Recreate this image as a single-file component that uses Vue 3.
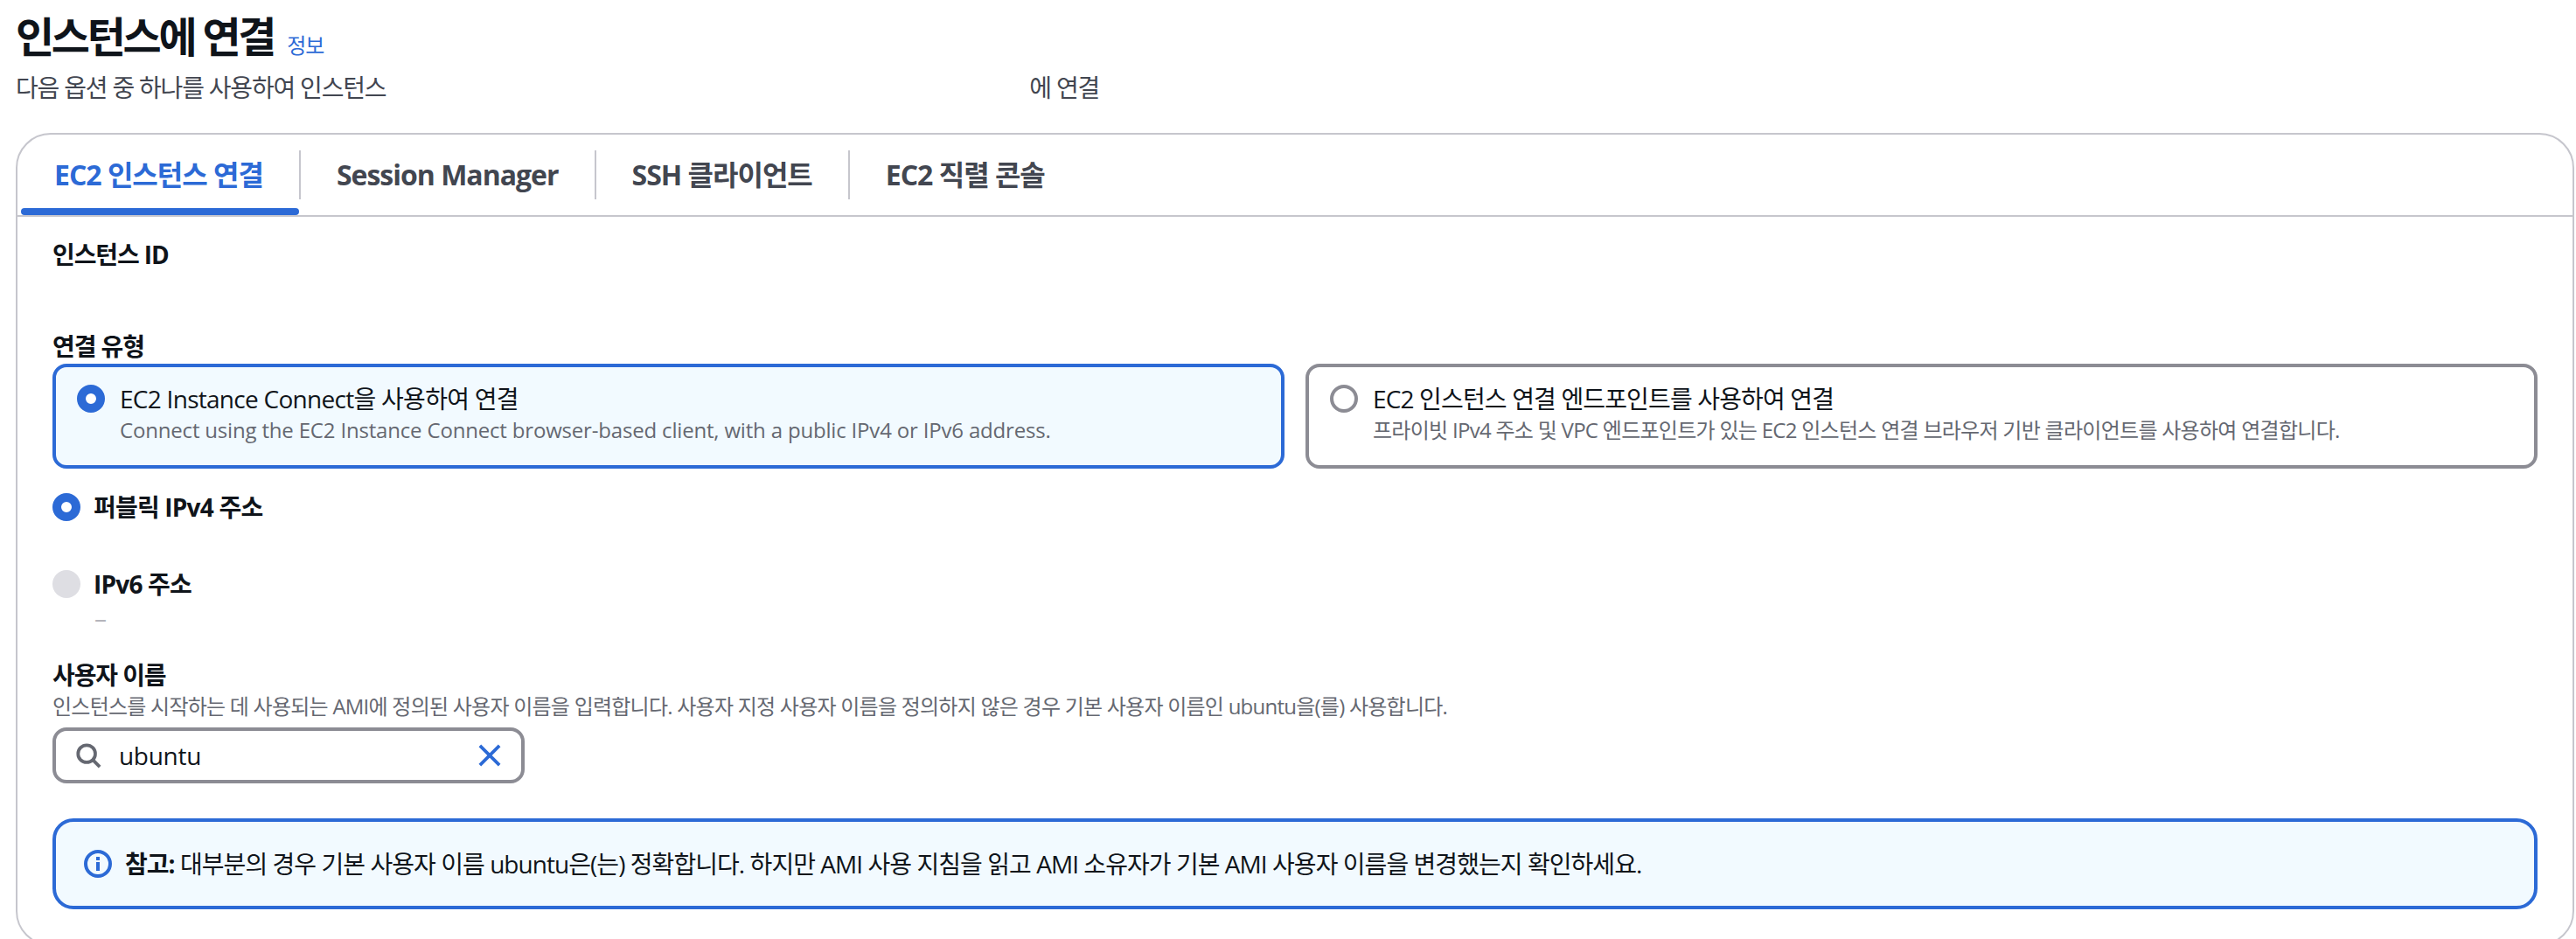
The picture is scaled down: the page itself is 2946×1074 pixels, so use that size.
<script setup>
const tabs = ['EC2 인스턴스 연결', 'Session Manager', 'SSH 클라이언트', 'EC2 직렬 콘솔']
</script>

<template>
  <main class="page">
    <header class="head">
      <div class="title-row">
        <h1 class="title">인스턴스에 연결</h1>
        <a class="info">정보</a>
      </div>
      <p class="subtitle"><span>다음 옵션 중 하나를 사용하여 인스턴스</span><span class="blank"></span><span>에 연결</span></p>
    </header>

    <section class="panel">
      <nav class="tabs">
        <div v-for="(t, i) in tabs" :key="t" class="tab" :class="{ active: i === 0 }">{{ t }}</div>
      </nav>

      <div class="body">
        <div class="label id-label">인스턴스 ID</div>
        <div class="label type-label">연결 유형</div>
        <div class="cards">
          <div class="card selected">
            <span class="radio on"></span>
            <div class="card-text">
              <div class="card-title">EC2 Instance Connect을 사용하여 연결</div>
              <div class="muted latin">Connect using the EC2 Instance Connect browser-based client, with a public IPv4 or IPv6 address.</div>
            </div>
          </div>
          <div class="card">
            <span class="radio off"></span>
            <div class="card-text">
              <div class="card-title">EC2 인스턴스 연결 엔드포인트를 사용하여 연결</div>
              <div class="muted">프라이빗 IPv4 주소 및 VPC 엔드포인트가 있는 EC2 인스턴스 연결 브라우저 기반 클라이언트를 사용하여 연결합니다.</div>
            </div>
          </div>
        </div>

        <div class="option first"><span class="radio on"></span><span class="label">퍼블릭 IPv4 주소</span></div>
        <div class="option second"><span class="radio disabled"></span><span class="label">IPv6 주소</span></div>
        <div class="dash">–</div>

        <div class="label">사용자 이름</div>
        <div class="muted hint">인스턴스를 시작하는 데 사용되는 AMI에 정의된 사용자 이름을 입력합니다. 사용자 지정 사용자 이름을 정의하지 않은 경우 기본 사용자 이름인 ubuntu을(를) 사용합니다.</div>
        <div class="search">
          <svg class="search-icon" viewBox="0 0 32 32" fill="none" stroke="#656871" stroke-width="4">
            <circle cx="14" cy="14" r="10.5" />
            <path d="M21.5 21.5 30 30" />
          </svg>
          <span class="search-value">ubuntu</span>
          <svg class="clear-icon" viewBox="0 0 28 28" fill="none" stroke="#2c6ad6" stroke-width="4">
            <path d="M2 2 26 26M26 2 2 26" />
          </svg>
        </div>

        <div class="alert">
          <svg class="alert-icon" viewBox="0 0 32 32" fill="none" stroke="#2c6ad6" stroke-width="4">
            <circle cx="16" cy="16" r="14" />
            <path d="M16 14v10M16 8v4" />
          </svg>
          <p class="alert-text"><b>참고:</b> 대부분의 경우 기본 사용자 이름 ubuntu은(는) 정확합니다. 하지만 AMI 사용 지침을 읽고 AMI 소유자가 기본 AMI 사용자 이름을 변경했는지 확인하세요.</p>
        </div>
      </div>
    </section>
  </main>
</template>

<style>
html, body { margin: 0; background: #fff; overflow: hidden; }
</style>

<style scoped>
.page {
  width: 2946px;
  box-sizing: border-box;
  padding-top: 12px;
  font-family: "Open Sans", "Noto Sans CJK KR", sans-serif;
  font-size: 28px;
  color: #0f141a;
}
.head { padding-left: 18px; }
.title-row { display: flex; align-items: center; height: 60px; gap: 15px; }
.title { margin: 0; font-size: 48px; font-weight: 700; line-height: 60px; letter-spacing: -3.3px; }
.info { font-size: 24px; color: #2c6ad6; line-height: 32px; margin-top: 20px; letter-spacing: -1px; }
.subtitle { margin: 8px 0 0; display: flex; line-height: 40px; color: #424650; letter-spacing: -1.2px; }
.blank { width: 736px; }

.panel {
  margin: 32px 2px 0 18px;
  border: 2px solid #c6c6cd;
  border-radius: 40px;
  background: #fff;
}
.tabs {
  display: flex;
  height: 92px;
  border-bottom: 2px solid #c6c6cd;
  padding-left: 4px;
}
.tab {
  position: relative;
  height: 56px;
  margin-top: 18px;
  padding: 0 41px;
  border-right: 2px solid #c6c6cd;
  font-size: 32px;
  font-weight: 700;
  line-height: 56px;
  letter-spacing: -1px;
  color: #424650;
}
.tab:first-child { padding: 0 41px 0 38px; }
.tab:last-child { border-right: 0; }
.tab.active { color: #2c6ad6; }
.tab.active::after {
  content: "";
  position: absolute;
  left: 0;
  right: 0;
  top: 66px;
  height: 8px;
  border-radius: 4px;
  background: #2c6ad6;
}

.body { padding: 23px 40px 40px; }
.label { font-weight: 700; line-height: 40px; color: #0f141a; letter-spacing: -1.1px; }
.option .label { letter-spacing: -0.8px; }
.type-label { margin-top: 65px; }
.cards { display: grid; grid-template-columns: 1fr 1fr; gap: 24px; }
.card {
  display: flex;
  height: 120px;
  box-sizing: border-box;
  border: 4px solid #8c8c94;
  border-radius: 16px;
  padding: 20px 24px 0;
  gap: 17px;
}
.card.selected { border-color: #2c6ad6; background: #f2faff; }
.card-text { margin-top: -2px; }
.card-title { line-height: 36px; color: #0f141a; letter-spacing: -0.85px; }
.selected .card-title { letter-spacing: -0.72px; }
.muted { font-size: 24px; line-height: 36px; color: #656871; letter-spacing: -0.72px; }
.muted.latin { letter-spacing: -0.18px; }

.radio { flex: none; display: block; width: 32px; height: 32px; box-sizing: border-box; border-radius: 50%; }
.radio.on { border: 10px solid #2c6ad6; background: #fff; }
.radio.off { border: 4px solid #8c8c94; background: #fff; }
.radio.disabled { background: #dedee3; }

.option { display: flex; align-items: center; gap: 15px; height: 40px; }
.option.first { margin-top: 24px; }
.option.second { margin-top: 48px; }
.dash { margin: 0 0 28px 48px; height: 36px; line-height: 36px; color: #b4b4bb; }

.hint { line-height: 32px; letter-spacing: -0.76px; }
.search {
  display: flex;
  align-items: center;
  width: 540px;
  height: 64px;
  box-sizing: border-box;
  margin-top: 8px;
  border: 4px solid #8c8c94;
  border-radius: 16px;
  padding: 0 22px;
}
.search-icon { width: 30px; height: 30px; flex: none; }
.search-value { flex: 1; margin-left: 20px; letter-spacing: -0.3px; }
.clear-icon { width: 28px; height: 26px; flex: none; }

.alert {
  display: flex;
  align-items: center;
  height: 104px;
  box-sizing: border-box;
  margin-top: 40px;
  border: 4px solid #2c6ad6;
  border-radius: 24px;
  background: #f2faff;
  padding: 0 32px;
  gap: 15px;
}
.alert-icon { width: 32px; height: 32px; flex: none; }
.alert-text { margin: 0; line-height: 40px; letter-spacing: -0.95px; }
</style>
